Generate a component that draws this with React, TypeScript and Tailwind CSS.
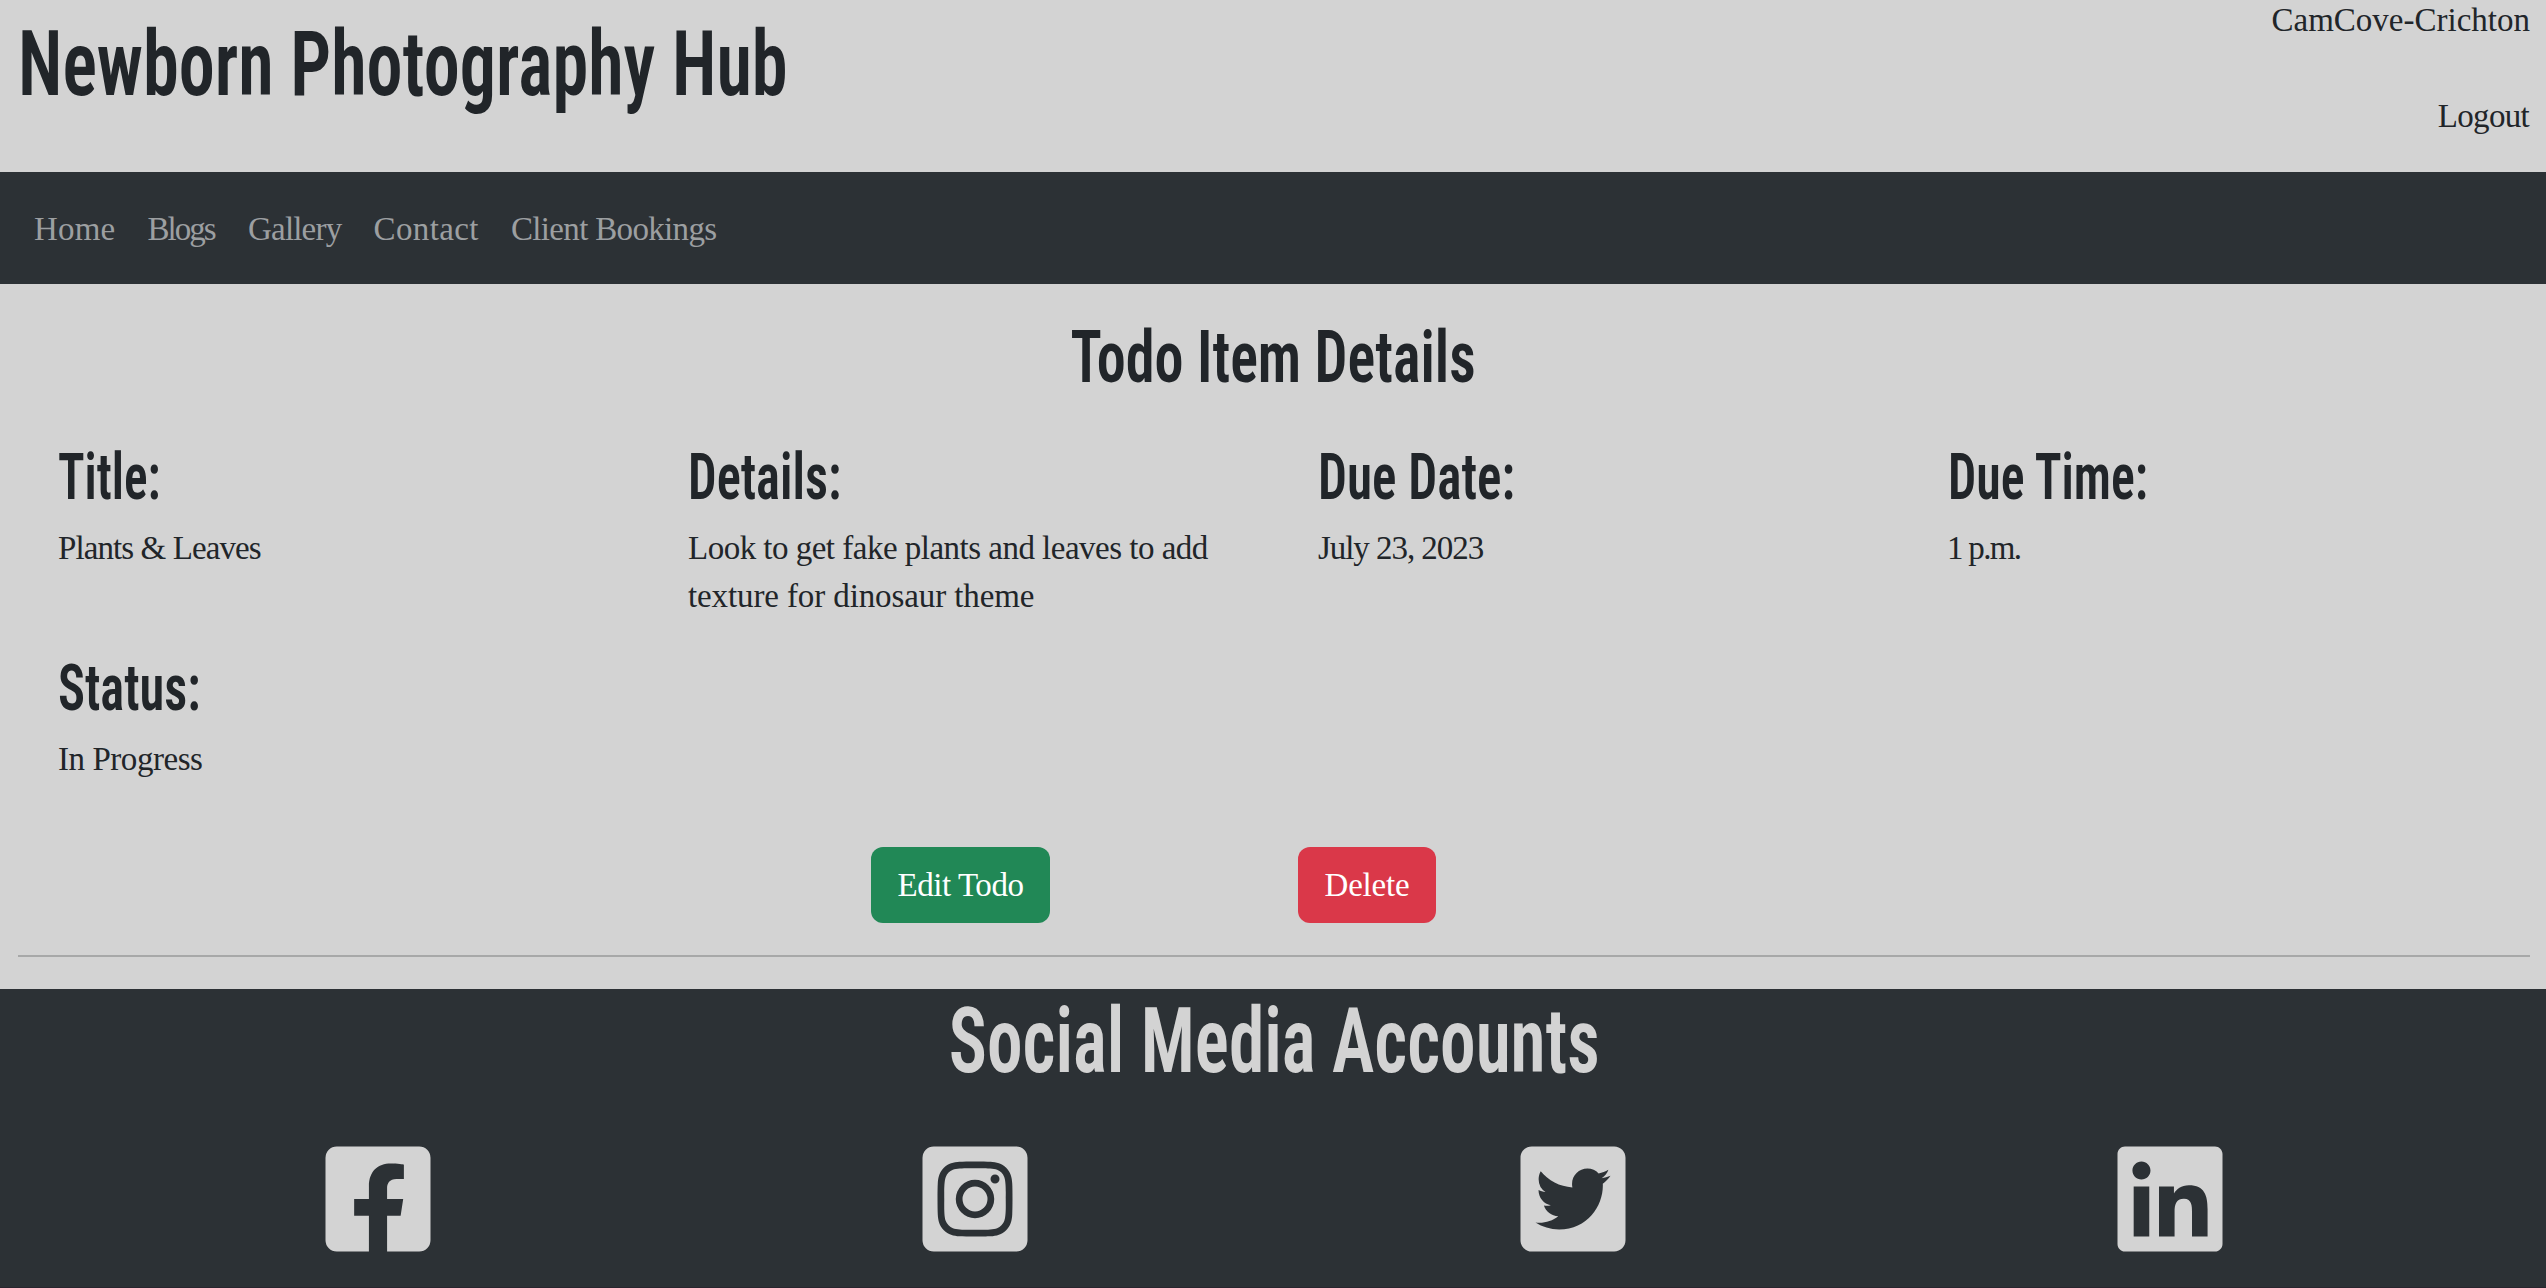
import type { ReactNode } from "react";
import { FaFacebookSquare, FaInstagramSquare, FaLinkedin, FaTwitterSquare } from "react-icons/fa";

const heading = "font-['Roboto_Condensed','Roboto',sans-serif] font-[560] whitespace-nowrap";

function Field({ label, labelClass, children }: { label: string; labelClass: string; children: ReactNode }) {
  return (
    <div>
      <h3 className={`${heading} w-max origin-left text-[64px] leading-[67px] ${labelClass}`}>{label}</h3>
      <div className="mt-[13px] whitespace-nowrap">{children}</div>
    </div>
  );
}

const navItems = [
  { label: "Home", className: "w-[113.5px] tracking-[0.2px]" },
  { label: "Blogs", className: "w-[100.5px] tracking-[-2px]" },
  { label: "Gallery", className: "w-[125.5px] tracking-[-0.8px]" },
  { label: "Contact", className: "w-[137.5px] tracking-[0.4px]" },
  { label: "Client Bookings", className: "tracking-[-0.67px]" },
];

const socials = [
  { name: "Facebook", Icon: FaFacebookSquare },
  { name: "Instagram", Icon: FaInstagramSquare },
  { name: "Twitter", Icon: FaTwitterSquare },
  { name: "LinkedIn", Icon: FaLinkedin },
];

export default function App() {
  return (
    <div className="flex h-[1288px] flex-col overflow-hidden bg-[#d3d3d3] font-['Liberation_Serif',serif] text-[33px] leading-[48px] text-[#212529]">
      <header className="flex h-[172px] shrink-0 justify-between pr-4 pl-[18px]">
        <h1 className={`${heading} mt-4 h-24 w-max origin-left scale-x-[0.79] text-[91.5px] leading-[96px]`}>
          Newborn Photography Hub
        </h1>
        <div className="flex flex-col items-end">
          <span className="leading-[41px]">CamCove-Crichton</span>
          <span className="mt-[51px] mr-px tracking-[-0.7px]">Logout</span>
        </div>
      </header>

      <nav className="flex h-28 shrink-0 items-center bg-[#2c3135] pt-px pl-[34px] text-[#9c9fa1]">
        {navItems.map((item) => (
          <a key={item.label} className={`shrink-0 whitespace-nowrap ${item.className}`}>
            {item.label}
          </a>
        ))}
      </nav>

      <main className="flex h-[705px] shrink-0 flex-col pt-[35px]">
        <h2 className={`${heading} ml-px self-center scale-x-[0.797] text-[73px] leading-[77px]`}>Todo Item Details</h2>

        <section className="mt-12 grid grid-cols-[630px_630px_630px_1fr] pl-[58px]">
          <Field label="Title:" labelClass="scale-x-[0.772]">
            <p className="tracking-[-0.91px]">Plants &amp; Leaves</p>
          </Field>
          <Field label="Details:" labelClass="scale-x-[0.79]">
            <p className="tracking-[-0.51px]">Look to get fake plants and leaves to add</p>
            <p className="tracking-[-0.11px]">texture for dinosaur theme</p>
          </Field>
          <Field label="Due Date:" labelClass="scale-x-[0.8]">
            <p className="tracking-[-1.05px]">July 23, 2023</p>
          </Field>
          <Field label="Due Time:" labelClass="scale-x-[0.78]">
            <p className="-ml-px tracking-[-1.7px]">1 p.m.</p>
          </Field>
        </section>

        <section className="mt-[35px] pl-[58px]">
          <Field label="Status:" labelClass="scale-x-[0.789]">
            <p className="tracking-[-0.45px]">In Progress</p>
          </Field>
        </section>

        <div className="mt-16 flex pl-[871px] text-white">
          <button className="h-[76px] w-[179px] rounded-xl bg-[#218856] tracking-[-0.44px]">Edit Todo</button>
          <button className="ml-[248px] h-[76px] w-[138px] rounded-xl bg-[#da3849] tracking-[-0.18px]">Delete</button>
        </div>

        <hr className="mr-4 ml-[18px] mt-8 border-t-2 border-[#a7a8a8]" />
      </main>

      <footer className="flex h-[299px] shrink-0 flex-col border-b border-[#29252e] bg-[#2c3135] pt-1 text-[#d3d3d3]">
        <h2 className={`${heading} ml-0.5 self-center scale-x-[0.78] text-[91.5px] leading-[96px]`}>
          Social Media Accounts
        </h2>
        <div className="mt-[50px] grid grid-cols-4 pr-[77px] pl-[79px] text-[120px]">
          {socials.map(({ name, Icon }) => (
            <a key={name} aria-label={name} className="flex justify-center">
              <Icon />
            </a>
          ))}
        </div>
      </footer>
    </div>
  );
}
